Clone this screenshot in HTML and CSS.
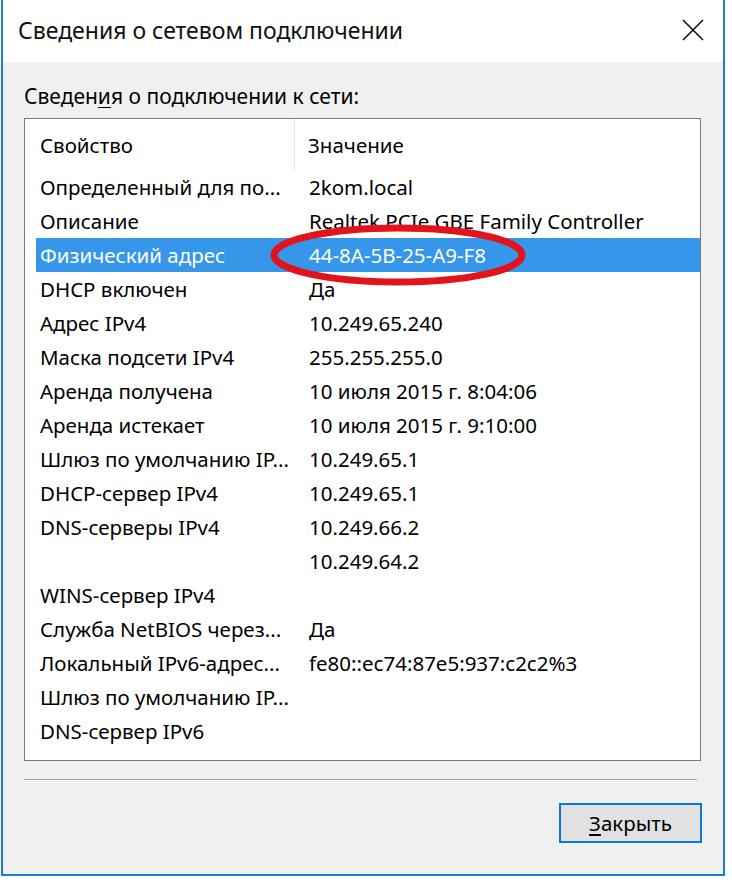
FILE: index.html
```html
<!DOCTYPE html>
<html lang="ru">
<head>
<meta charset="utf-8">
<title>Сведения о сетевом подключении</title>
<link rel="stylesheet" href="styles.css">
</head>
<body>
<div class="window">
  <div class="titlebar">
    <div class="title">Сведения о сетевом подключении</div>
    <svg class="close" width="22" height="22" viewBox="0 0 22 22"><path d="M1 1 L21 21 M21 1 L1 21" stroke="#111" stroke-width="1.6" fill="none"/></svg>
  </div>
  <div class="content">
    <div class="label">Сведен<u>и</u>я о подключении к сети:</div>
    <div class="listbox">
      <div class="header">
        <div class="hcell name">Свойство</div>
        <div class="hcell value">Значение</div>
      </div>
      <div class="rows">
        <div class="row"><div class="name">Определенный для по...</div><div class="value">2kom.local</div></div>
        <div class="row"><div class="name">Описание</div><div class="value">Realtek PCIe GBE Family Controller</div></div>
        <div class="row selected"><div class="name">Физический адрес</div><div class="value">44-8A-5B-25-A9-F8</div></div>
        <div class="row"><div class="name">DHCP включен</div><div class="value">Да</div></div>
        <div class="row"><div class="name">Адрес IPv4</div><div class="value">10.249.65.240</div></div>
        <div class="row"><div class="name">Маска подсети IPv4</div><div class="value">255.255.255.0</div></div>
        <div class="row"><div class="name">Аренда получена</div><div class="value">10 июля 2015 г. 8:04:06</div></div>
        <div class="row"><div class="name">Аренда истекает</div><div class="value">10 июля 2015 г. 9:10:00</div></div>
        <div class="row"><div class="name">Шлюз по умолчанию IP...</div><div class="value">10.249.65.1</div></div>
        <div class="row"><div class="name">DHCP-сервер IPv4</div><div class="value">10.249.65.1</div></div>
        <div class="row"><div class="name">DNS-серверы IPv4</div><div class="value">10.249.66.2</div></div>
        <div class="row"><div class="name"></div><div class="value">10.249.64.2</div></div>
        <div class="row"><div class="name">WINS-сервер IPv4</div><div class="value"></div></div>
        <div class="row"><div class="name">Служба NetBIOS через...</div><div class="value">Да</div></div>
        <div class="row"><div class="name">Локальный IPv6-адрес...</div><div class="value">fe80::ec74:87e5:937:c2c2%3</div></div>
        <div class="row"><div class="name">Шлюз по умолчанию IP...</div><div class="value"></div></div>
        <div class="row"><div class="name">DNS-сервер IPv6</div><div class="value"></div></div>
      </div>
      <svg class="mark" width="270" height="74" viewBox="0 0 270 74"><ellipse cx="135" cy="36" rx="124" ry="27" fill="none" stroke="#e3131b" stroke-width="7"/></svg>
    </div>
    <div class="separator"></div>
    <div class="footer">
      <button class="btn"><u>З</u>акрыть</button>
    </div>
  </div>
</div>
</body>
</html>
```

FILE: styles.css
```css
html, body {
  margin: 0;
  padding: 0;
  background: #ffffff;
}

body {
  font-family: "Noto Sans", "Open Sans", "DejaVu Sans", sans-serif;
  color: #000;
}

.window {
  margin-left: 1px;
  width: 720px;
  height: 874px;
  border-left: 2px solid #1a7dd0;
  border-right: 2px solid #1a7dd0;
  border-bottom: 2px solid #1a7dd0;
  display: flex;
  flex-direction: column;
  background: #f0f0f0;
}

.titlebar {
  height: 62px;
  background: #ffffff;
  display: flex;
  align-items: center;
  justify-content: space-between;
  padding: 0 19px 0 15px;
  flex-shrink: 0;
}

.title {
  font-size: 23px;
  color: #111;
  margin-top: -2px;
}

.close {
  display: block;
  margin-top: -2px;
}

.content {
  flex: 1;
  padding: 22px 22px 0 21px;
  display: flex;
  flex-direction: column;
}

.label {
  font-size: 21px;
  line-height: 24px;
  height: 34px;
}

.label u {
  text-decoration-thickness: 1px;
  text-underline-offset: 3px;
}

.listbox {
  position: relative;
  height: 641px;
  border: 1px solid #7a7a7a;
  background: #ffffff;
  padding-left: 11px;
}

.header {
  display: grid;
  grid-template-columns: 259px 1fr;
  height: 51px;
}

.hcell {
  display: flex;
  align-items: center;
  font-size: 20.5px;
}

.hcell.name {
  padding-left: 4px;
  border-right: 1px solid #e5e5e5;
}

.hcell.value {
  padding-left: 13px;
}

.rows {
  display: flex;
  flex-direction: column;
}

.row {
  display: grid;
  grid-template-columns: 259px 1fr;
  height: 34px;
  align-items: center;
  font-size: 20.5px;
  white-space: nowrap;
}

.row .name {
  padding-left: 4px;
  overflow: hidden;
}

.row .value {
  padding-left: 14px;
}

.row.selected {
  background: #3596ea;
  color: #ffffff;
}

.mark {
  position: absolute;
  left: 238px;
  top: 100px;
}

.separator {
  margin-top: 18px;
  height: 1px;
  background: #a0a0a0;
  border-bottom: 1px solid #ffffff;
  width: 673px;
}

.footer {
  display: flex;
  justify-content: flex-end;
  padding-top: 22px;
}

.btn {
  width: 143px;
  height: 40px;
  border: 2px solid #0a78d4;
  background: #e1e1e1;
  font-family: "Noto Sans", "Open Sans", sans-serif;
  font-size: 20.5px;
  color: #000;
  padding: 0;
  margin-right: -1px;
}

.btn u {
  text-underline-offset: 3px;
}
```
